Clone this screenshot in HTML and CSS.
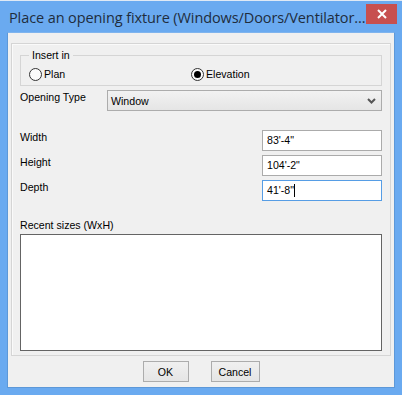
FILE: index.html
```html
<!DOCTYPE html>
<html lang="en">
<head>
    <meta charset="UTF-8">
    <title>Place an opening fixture</title>
    <link rel="stylesheet" href="styles.css">
</head>
<body>
    <div class="window">
        <div class="titlebar">
            <span class="title">Place an opening fixture (Windows/Doors/Ventilator...</span>
            <button type="button" class="close-btn">
                <svg width="10" height="10" viewBox="0 0 10 10"><path d="M1 1 L9 9 M9 1 L1 9" stroke="#fff" stroke-width="2"/></svg>
            </button>
        </div>

        <div class="client">
            <div class="panel">
                <fieldset class="group">
                    <legend>Insert in</legend>
                    <div class="radio-row">
                        <label class="radio"><span class="dot"></span>Plan</label>
                        <label class="radio checked"><span class="dot"></span>Elevation</label>
                    </div>
                </fieldset>

                <div class="row type-row">
                    <span class="label">Opening Type</span>
                    <div class="select">
                        <span>Window</span>
                        <svg width="9" height="6" viewBox="0 0 9 6"><path d="M1 1 L4.5 4.5 L8 1" stroke="#555" stroke-width="2" fill="none"/></svg>
                    </div>
                </div>

                <div class="dims">
                    <div class="row">
                        <span class="label">Width</span>
                        <div class="field">83'-4"</div>
                    </div>
                    <div class="row">
                        <span class="label">Height</span>
                        <div class="field">104'-2"</div>
                    </div>
                    <div class="row">
                        <span class="label">Depth</span>
                        <div class="field focused">41'-8"<span class="caret"></span></div>
                    </div>
                </div>

                <div class="recent-label">Recent sizes (WxH)</div>
                <div class="recent-list"></div>
            </div>

            <div class="buttons">
                <button type="button" class="btn btn-ok">OK</button>
                <button type="button" class="btn btn-cancel">Cancel</button>
            </div>
        </div>
    </div>
</body>
</html>
```

FILE: styles.css
```css
:root {
    --frame-blue: #6aaaf0;
    --client-bg: #f0f0f0;
    --text-dark: #000000;
    --line-gray: #d5d5d5;
}

* {
    box-sizing: border-box;
    margin: 0;
    padding: 0;
}

body {
    font-family: 'Liberation Sans', Arial, sans-serif;
    font-size: 10.6px;
    color: var(--text-dark);
    background: #ffffff;
}

.window {
    width: 402px;
    height: 395px;
    background-color: var(--frame-blue);
    border-top: 1px solid #dfe9f5;
}

.titlebar {
    height: 31px;
    display: flex;
    align-items: flex-start;
}

.title {
    font-family: 'Open Sans', sans-serif;
    font-size: 14.5px;
    color: #1f2d3d;
    padding: 7px 0 0 9px;
    white-space: nowrap;
    letter-spacing: -0.1px;
}

.close-btn {
    margin: 3px 5px 0 auto;
    width: 31px;
    height: 20px;
    border: none;
    background-color: #c75050;
    display: flex;
    align-items: center;
    justify-content: center;
}

.client {
    margin: 0 7px;
    height: 356px;
    background-color: var(--client-bg);
    border: 1px solid #5d98d8;
    border-top-color: #7fb4ee;
    padding: 10px 3px 0 3px;
}

.panel {
    height: 313px;
    border: 1px solid var(--line-gray);
    box-shadow: inset 1px 1px 0 #fafafa;
    padding: 0 8px;
}

.group {
    border: 1px solid var(--line-gray);
    height: 37px;
    padding: 0 0 0 8px;
    margin-top: 5px;
}

.group legend {
    padding: 0 3px;
    margin-left: 0;
    line-height: 12px;
}

.radio-row {
    display: flex;
    padding-top: 7px;
}

.radio {
    display: flex;
    align-items: center;
    gap: 2px;
    line-height: 13px;
}

.radio:first-child {
    width: 162px;
}

.dot {
    width: 13px;
    height: 13px;
    border-radius: 50%;
    border: 1px solid #333;
    background: #fbfbfb;
    display: flex;
    align-items: center;
    justify-content: center;
}

.radio.checked .dot::after {
    content: "";
    width: 7px;
    height: 7px;
    border-radius: 50%;
    background: #000;
}

.row {
    display: flex;
    justify-content: space-between;
    align-items: flex-start;
}

.label {
    line-height: 12px;
    padding-top: 1px;
}

.type-row {
    margin-top: 4px;
}

.select {
    width: 275px;
    height: 21px;
    border: 1px solid #acacac;
    background: linear-gradient(#f2f2f2, #e5e5e5);
    display: flex;
    align-items: center;
    justify-content: space-between;
    padding: 0 5px 0 3px;
}

.dims {
    margin-top: 19px;
    display: flex;
    flex-direction: column;
    gap: 4px;
}

.field {
    width: 120px;
    height: 21px;
    border: 1px solid #ababab;
    background: #ffffff;
    padding: 3px 0 0 4px;
    line-height: 13px;
}

.field.focused {
    border-color: #569de5;
}

.caret {
    display: inline-block;
    width: 1px;
    height: 13px;
    background: #000;
    vertical-align: top;
}

.recent-label {
    margin-top: 18px;
    line-height: 12px;
}

.recent-list {
    margin-top: 3px;
    height: 117px;
    border: 1px solid #646464;
    background: #ffffff;
}

.buttons {
    display: flex;
    justify-content: center;
    gap: 22px;
    margin-top: 5px;
}

.btn {
    height: 21px;
    border: 1px solid #acacac;
    background: linear-gradient(#f0f0f0, #e5e5e5);
    font-family: 'Liberation Sans', Arial, sans-serif;
    font-size: 10.6px;
    color: #000;
}

.btn-ok {
    width: 46px;
}

.btn-cancel {
    width: 49px;
}
```
